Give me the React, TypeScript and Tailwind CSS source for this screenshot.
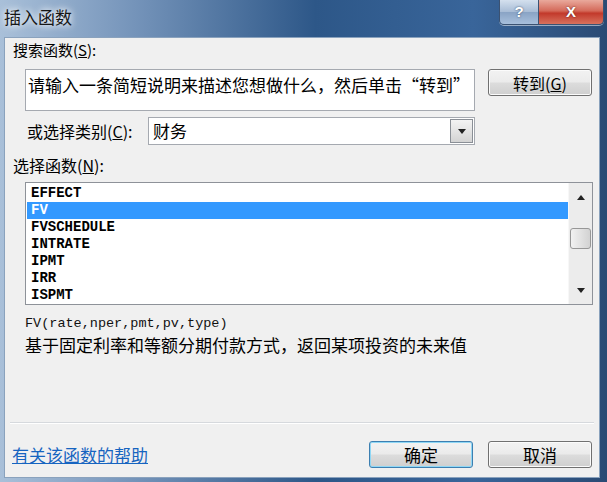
import React from 'react'

const items = ['EFFECT', 'FV', 'FVSCHEDULE', 'INTRATE', 'IPMT', 'IRR', 'ISPMT']

const btn =
  'flex items-center justify-center rounded-[3px] border bg-[linear-gradient(180deg,#f2f2f2_0%,#ebebeb_48%,#dcdcdc_52%,#cfcfcf_100%)]'

function Tri({ up }: { up?: boolean }) {
  return (
    <svg width="8" height="5" viewBox="0 0 8 5">
      <path d={up ? 'M0 5 L4 0 L8 5 Z' : 'M0 0 L8 0 L4 5 Z'} fill="#222" />
    </svg>
  )
}

export default function App() {
  return (
    <div className="w-[607px] h-[482px] flex flex-col overflow-hidden bg-[linear-gradient(90deg,#a9c0d9_0%,#7594ba_22%,#2d5788_52%,#39659a_78%,#2a4a74_100%)] font-['Noto_Sans_CJK_SC',sans-serif] text-black">
      {/* title bar */}
      <div className="h-[37px] shrink-0 flex justify-between">
        <div className="pl-[4px] pt-[4px] text-[17px] leading-[26px] text-[#161616] [text-shadow:0_0_6px_#ffffff,0_0_10px_rgba(255,255,255,0.8)]">
          插入函数
        </div>
        <div className="flex h-[25px] mr-[3px] rounded-b-[5px] overflow-hidden border border-t-0 border-[#3b5272] shadow-[0_1px_0_rgba(255,255,255,0.5)]">
          <div className="w-[39px] flex items-center justify-center border-r border-[#3b5272] bg-[linear-gradient(180deg,#d4e0ee_0%,#a9bdd6_48%,#8aa4c5_52%,#a7bfdc_100%)] text-white font-bold text-[15px] font-['Liberation_Sans',sans-serif] [text-shadow:0_0_2px_#2c4566]">
            ?
          </div>
          <div className="w-[64px] flex items-center justify-center bg-[linear-gradient(180deg,#e9a99c_0%,#d46a5a_45%,#c2392b_55%,#d8715d_100%)] text-white font-bold text-[15px] font-['Liberation_Sans',sans-serif] [text-shadow:0_0_2px_#5a1b14]">
            X
          </div>
        </div>
      </div>

      {/* client */}
      <div className="flex-1 flex pl-[4px] pr-[7px] pb-[4px]">
        <div className="flex-1 flex flex-col bg-[#f0f0f0] border border-[#8aa2bd]">
          <div className="h-[24px] flex items-center pl-[8px] text-[15px]">
            搜索函数(<u>S</u>):
          </div>

          <div className="mt-[7px] flex pl-[20px]">
            <div className="w-[450px] h-[42px] bg-white border border-[#a5a9b0] pl-[2px] pt-[5px] text-[17px] leading-[20px]">
              请输入一条简短说明来描述您想做什么，然后单击“转到”
            </div>
            <div className={`${btn} ml-[13px] w-[104px] h-[27px] border-[#707070] text-[16px] shadow-[inset_0_0_0_1px_#fbfbfb]`}>
              转到(<u>G</u>)
            </div>
          </div>

          <div className="mt-[6px] h-[28px] flex items-center pl-[22px]">
            <div className="w-[121px] text-[16px]">
              或选择类别(<u>C</u>):
            </div>
            <div className="w-[327px] h-[28px] flex bg-white border border-[#a5a9b0]">
              <div className="flex-1 pl-[4px] text-[17px] leading-[26px]">财务</div>
              <div className="w-[23px] my-[1px] mr-[1px] flex items-center justify-center border border-[#8a8f96] bg-[linear-gradient(180deg,#f3f3f3_0%,#e4e4e4_50%,#d3d3d3_100%)]">
                <Tri />
              </div>
            </div>
          </div>

          <div className="h-[37px] pt-[3px] flex items-center pl-[8px] text-[16px]">
            选择函数(<u>N</u>):
          </div>

          <div className="ml-[20px] w-[568px] h-[123px] flex bg-white border border-[#8e9299]">
            <div className="flex-1 pt-[2px] pl-[1px] font-['Liberation_Mono',monospace] font-bold text-[14px]">
              {items.map((it) => (
                <div
                  key={it}
                  className={`h-[17px] leading-[17px] pl-[4px] ${it === 'FV' ? 'bg-[#3399ff] text-white' : 'text-black'}`}
                >
                  {it}
                </div>
              ))}
            </div>
            <div className="w-[24px] flex flex-col bg-[#ececec] border-l border-[#f7f7f7]">
              <div className="h-[28px] flex items-center justify-center">
                <Tri up />
              </div>
              <div className="flex-1 flex flex-col items-center">
                <div className="mt-[17px] w-[21px] h-[21px] rounded-[3px] border border-[#979797] bg-[linear-gradient(90deg,#f2f2f2_0%,#e2e2e2_50%,#d2d2d2_100%)]" />
              </div>
              <div className="h-[28px] flex items-center justify-center">
                <Tri />
              </div>
            </div>
          </div>

          <div className="mt-[12px] h-[13px] pl-[20px] font-['Liberation_Mono',monospace] text-[13.5px] leading-[13px] text-[#111]">
            FV(rate,nper,pmt,pv,type)
          </div>
          <div className="mt-[5px] h-[20px] pl-[20px] text-[17px] leading-[20px]">
            基于固定利率和等额分期付款方式，返回某项投资的未来值
          </div>

          <div className="flex-1" />

          <div className="mx-[5px] h-[1px] bg-[#d6d9dd] shadow-[0_1px_0_#ffffff]" />
          <div className="pt-[18px] pb-[9px] flex items-center pl-[7px] pr-[7px]">
            <a className="text-[17px] leading-[20px] text-[#1664c0] underline cursor-pointer">有关该函数的帮助</a>
            <div className="flex-1" />
            <div className={`${btn} w-[104px] h-[27px] border-[#3c7fb1] text-[17px] shadow-[inset_0_0_0_1px_#8fd7f5]`}>
              确定
            </div>
            <div className={`${btn} ml-[15px] w-[104px] h-[27px] border-[#707070] text-[17px] shadow-[inset_0_0_0_1px_#fbfbfb]`}>
              取消
            </div>
          </div>
        </div>
      </div>
    </div>
  )
}
